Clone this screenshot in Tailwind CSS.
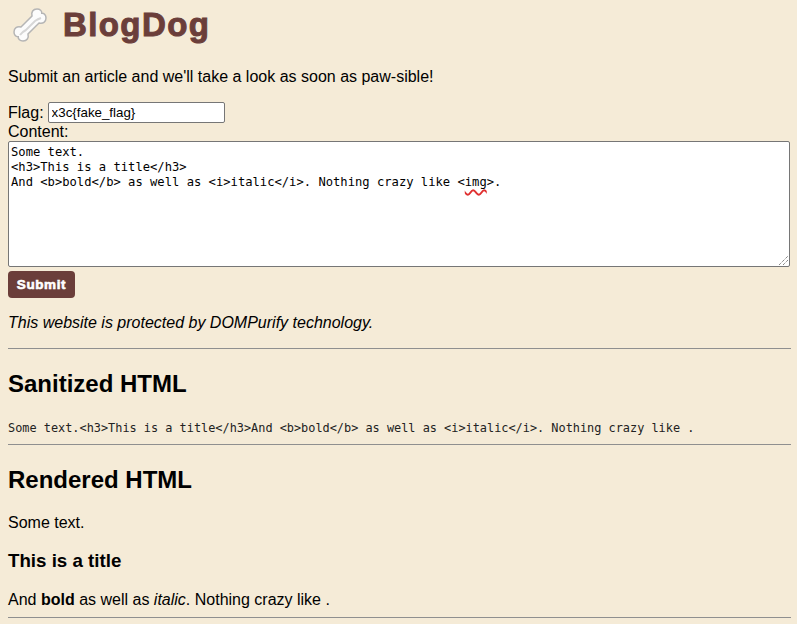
<!DOCTYPE html>
<html>
  <head>
    <title>BlogDog</title>
    <script src="https://cdn.jsdelivr.net/npm/@tailwindcss/browser@4"></script>
  </head>
  <body class="bg-[#f5ebd7] text-black font-['Liberation_Sans',Arial,sans-serif] text-base pl-2 pr-[6px] overflow-hidden h-[624px]">
    <header class="flex items-center h-[50px] pl-[5px]">
      <svg class="w-[34px] h-[34px] shrink-0" viewBox="0 0 34 34">
        <path d="M8 19 L19 8 C18 4 20 1 24 1 C27 1 29 2.800 28.800 5.200 C31.200 5 33 7 33 10 C33 14 30 16 26 15 L15 26 C16 30 14 33 10 33 C7 33 5 31.200 5.200 28.800 C2.800 29 1 27 1 24 C1 20 4 18 8 19 Z" fill="#fcfcfc" stroke="#b5b5b5" stroke-width="1.500"/>
        <path d="M7 27 Q9 24 13 22 L22 13 Q25 11 28 10" fill="none" stroke="#d6d6d6" stroke-width="2"/>
      </svg>
      <h1 class="ml-[16px] text-[33px] font-bold tracking-[1.4px] [-webkit-text-stroke:1px_#6b3e3a] text-[#6b3e3a] leading-[50px]">BlogDog</h1>
    </header>
    <p class="mt-[18px] leading-[18px]">Submit an article and we'll take a look as soon as paw-sible!</p>
    <form class="mt-[16px]">
      <div class="flex items-center h-[21px]">
        <label class="leading-[18px]">Flag:</label>
        <input type="text" value="x3c{fake_flag}" class="ml-[4px] w-[177px] h-[21px] bg-white border border-[#767676] rounded-[2px] px-[3px] text-[13.330px] text-black">
      </div>
      <label class="block leading-[18px]">Content:</label>
      <div class="relative h-[126px] w-[782px] bg-white border border-[#767676] rounded-[2px] px-[2px] py-[3px] font-['DejaVu_Sans_Mono',monospace] text-[12.170px] leading-[15px] whitespace-pre">Some text.
&lt;h3&gt;This is a title&lt;/h3&gt;
And &lt;b&gt;bold&lt;/b&gt; as well as &lt;i&gt;italic&lt;/i&gt;. Nothing crazy like &lt;<span class="underline decoration-wavy decoration-[#e03030] decoration-[1.500px] underline-offset-[3px]">img</span>&gt;.
        <svg class="absolute right-0 bottom-0 w-[11px] h-[11px]" viewBox="0 0 11 11"><path d="M1 10 L10 1 M5 10 L10 5" stroke="#555" stroke-width="1" stroke-dasharray="1 1"/></svg>
      </div>
      <button type="button" class="block mt-[4px] w-[67px] h-[27px] pt-[1px] bg-[#6b3e3a] text-white font-bold text-[13.500px] tracking-[0.6px] [-webkit-text-stroke:0.6px_#fff] rounded-[4px]">Submit</button>
    </form>
    <p class="mt-[16px] italic leading-[18px]">This website is protected by DOMPurify technology.</p>
    <hr class="mt-[16px] border-t border-[#8f8f8f]">
    <h2 class="mt-[21px] text-[24px] font-bold leading-[28px]">Sanitized HTML</h2>
    <pre class="mt-[23px] font-['DejaVu_Sans_Mono',monospace] text-[11.880px] leading-[15px] text-[#222]">Some text.&lt;h3&gt;This is a title&lt;/h3&gt;And &lt;b&gt;bold&lt;/b&gt; as well as &lt;i&gt;italic&lt;/i&gt;. Nothing crazy like .</pre>
    <hr class="mt-[8px] border-t border-[#8f8f8f]">
    <h2 class="mt-[21px] text-[24px] font-bold leading-[28px]">Rendered HTML</h2>
    <p class="mt-[20px] leading-[18px]">Some text.</p>
    <h3 class="mt-[18px] text-[18.720px] font-bold leading-[22px]">This is a title</h3>
    <p class="mt-[19px] leading-[18px]">And <b>bold</b> as well as <i>italic</i>. Nothing crazy like .</p>
    <hr class="mt-[8px] border-t border-[#8f8f8f]">
  </body>
</html>
